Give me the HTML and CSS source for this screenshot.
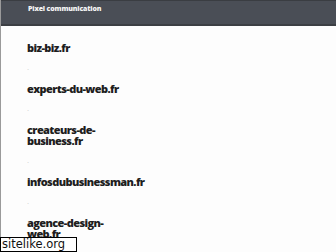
FILE: index.html
```html
<!DOCTYPE html>
<html lang="fr">

<head>
    <meta charset="UTF-8">
    <meta name="viewport" content="width=device-width, initial-scale=1.0">
    <title>Pixel communication</title>
    <link rel="stylesheet" href="styles.css">
</head>

<body>
    <div class="page">
        <header class="topbar">
            <span class="brand">Pixel communication</span>
        </header>

        <ul class="sites">
            <li class="site">
                <h2>biz-biz.fr</h2>
                <div class="sep">.</div>
            </li>
            <li class="site">
                <h2>experts-du-web.fr</h2>
                <div class="sep">.</div>
            </li>
            <li class="site">
                <h2>createurs-de-<br>business.fr</h2>
                <div class="sep">.</div>
            </li>
            <li class="site">
                <h2>infosdubusinessman.fr</h2>
                <div class="sep">.</div>
            </li>
            <li class="site">
                <h2>agence-design-<br>web.fr</h2>
            </li>
        </ul>
    </div>

    <div class="watermark">sitelike.org</div>
</body>

</html>
```

FILE: styles.css
```css
html,
body {
    margin: 0;
    padding: 0;
    height: 100%;
    overflow: hidden;
}

body {
    font-family: 'Open Sans', 'Liberation Sans', sans-serif;
    background-color: #fdfdfd;
    color: #222;
}

.page {
    min-height: 100%;
    border-left: 1px solid #9a9a9a;
}

.topbar {
    height: 23px;
    background-color: #4a4e56;
    border-top: 1px solid #3a3d42;
    border-bottom: 2px solid #3c3f44;
    padding-left: 27px;
    display: flex;
    align-items: center;
}

.brand {
    color: #f4f4f4;
    font-size: 7px;
    font-weight: 800;
    letter-spacing: -0.15px;
    margin-top: -9px;
}

.sites {
    list-style: none;
    margin: 0;
    padding: 16px 0 0 26px;
}

.site h2 {
    margin: 0;
    font-size: 11px;
    line-height: 11px;
    font-weight: 800;
    letter-spacing: -0.6px;
    color: #1e1e1e;
}

.sep {
    height: 8px;
    padding: 10px 0 12px;
    font-size: 8px;
    line-height: 8px;
    color: #d0d0d0;
}

.watermark {
    position: absolute;
    left: 0;
    bottom: 0;
    width: 74px;
    height: 13px;
    background-color: #fff;
    border: 1px solid #000;
    font-family: 'DejaVu Sans', sans-serif;
    font-size: 11.5px;
    line-height: 13px;
    color: #111;
    padding-left: 1px;
}
```
